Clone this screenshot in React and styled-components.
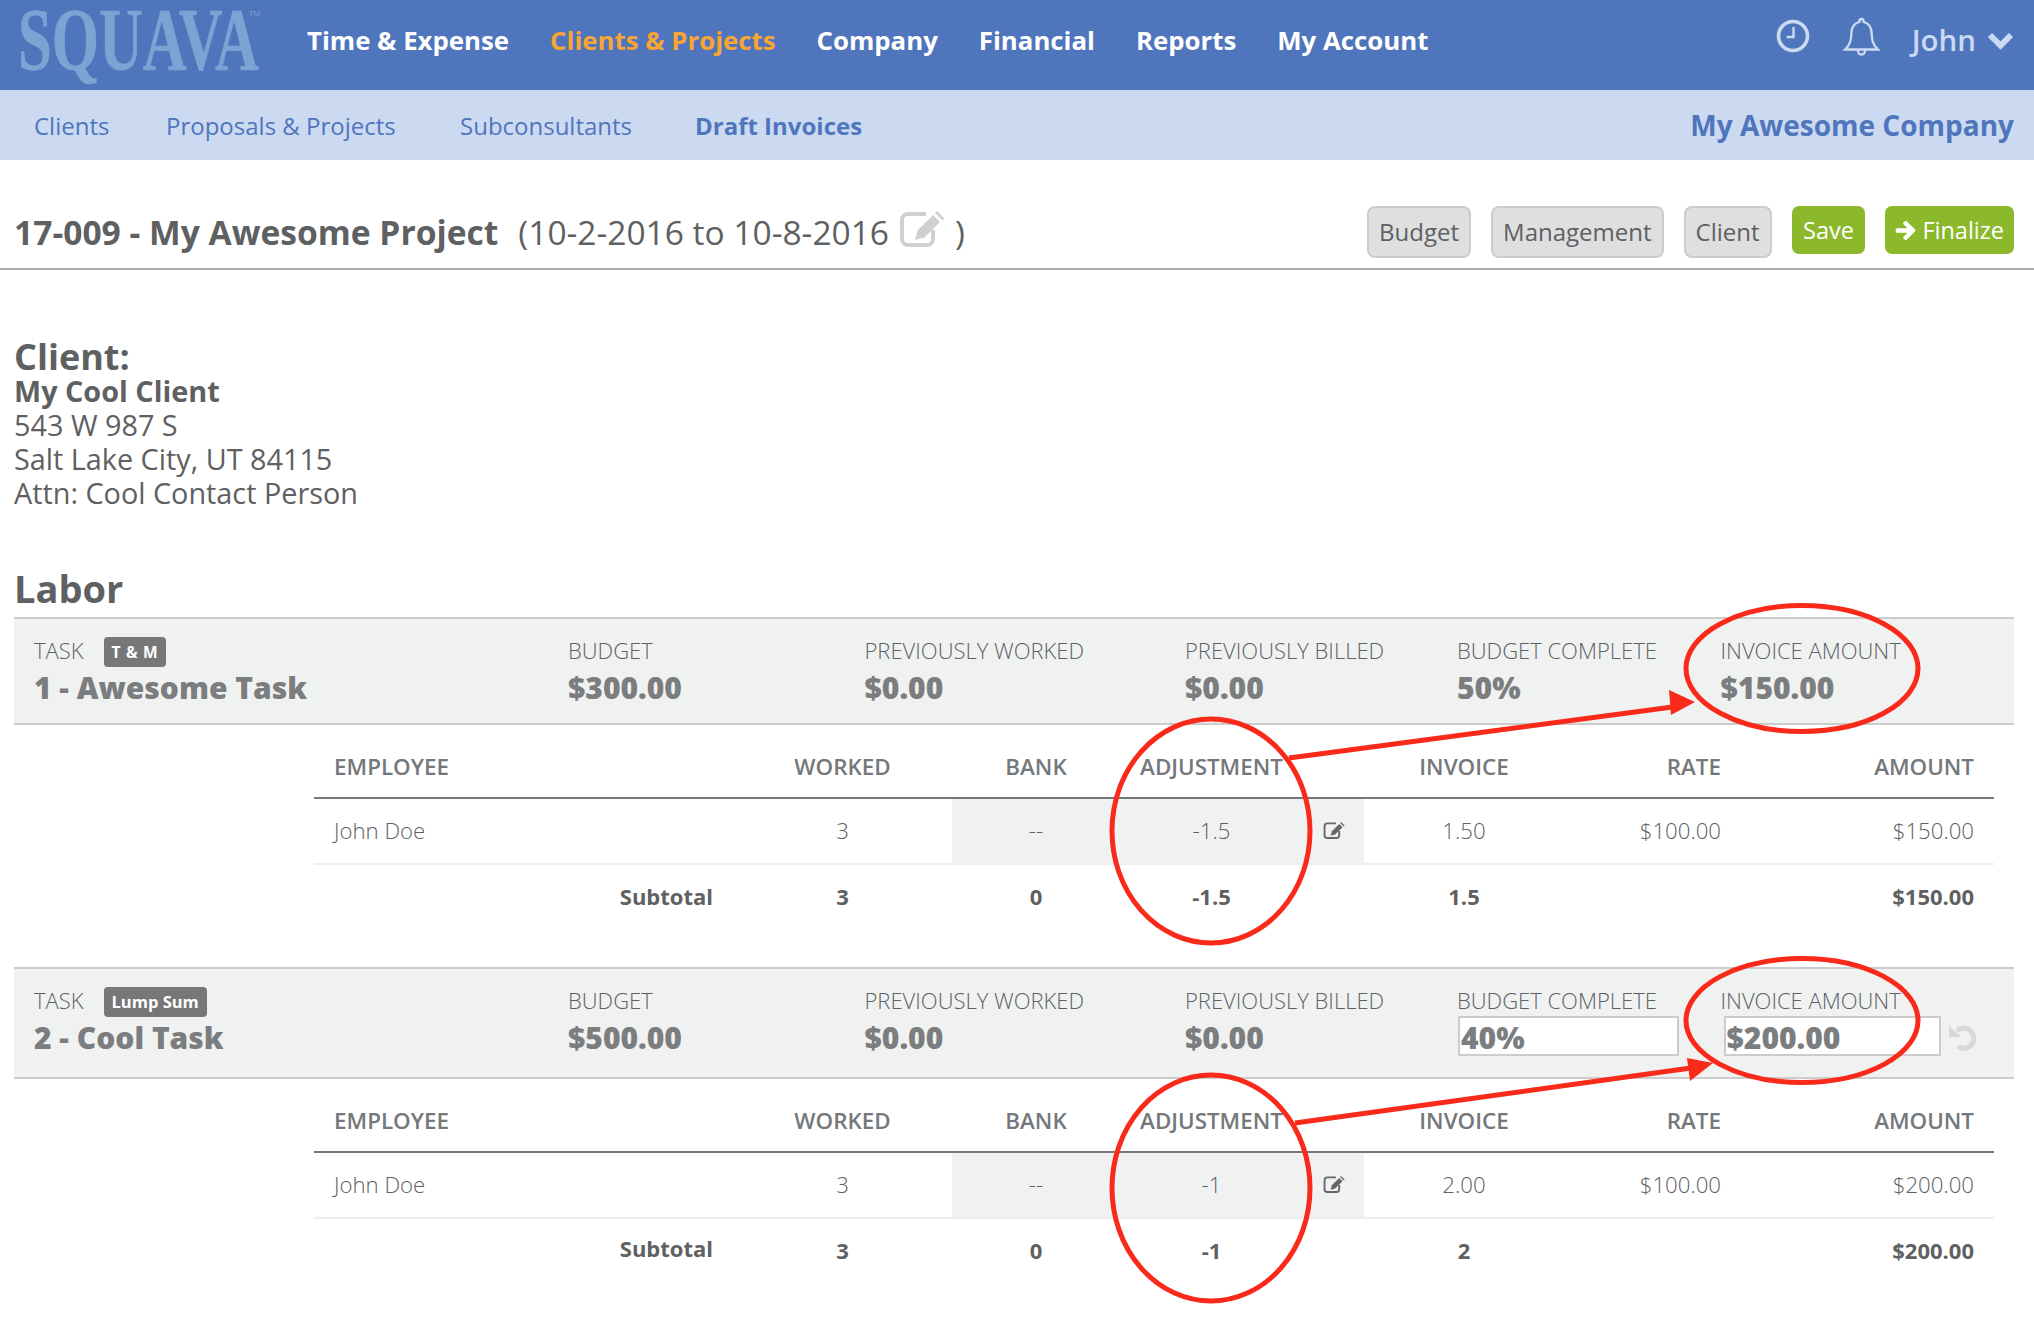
import React from "react";
import styled, { createGlobalStyle } from "styled-components";
import { FaArrowRight } from "react-icons/fa";

const Global = createGlobalStyle`
  html, body { margin: 0; padding: 0; background: #fff; }
  * { box-sizing: border-box; }
  body { font-family: "Open Sans", "Liberation Sans", sans-serif; color: #5e6062; }
`;

const Page = styled.div`
  position: relative;
  width: 2034px;
  height: 1320px;
  overflow: hidden;
`;

const TopBar = styled.header`
  display: flex;
  align-items: center;
  height: 90px;
  background: #4f75bd;
`;
const LogoBox = styled.div`
  position: relative;
  width: 307px;
  height: 90px;
  flex: none;
  padding-left: 18px;
`;
const Logo = styled.span`
  display: inline-block;
  font-family: "Liberation Serif", serif;
  font-weight: 700;
  font-size: 88px;
  line-height: 80px;
  color: #7ca3d3;
  -webkit-text-stroke: 0.6px #7ca3d3;
  transform: scaleX(0.69);
  transform-origin: left top;
  white-space: nowrap;
`;
const Trademark = styled.span`
  position: absolute;
  left: 249px;
  top: 8px;
  font-size: 8px;
  line-height: 10px;
  color: #7ca3d3;
`;
const MainNav = styled.nav`
  display: flex;
  gap: 41px;
  flex: 1;
`;
const MainLink = styled.a`
  font-size: 25.8px;
  font-weight: 700;
  line-height: 34px;
  margin-top: -10px;
  color: ${(p) => (p.$active ? "#f9a533" : "#fff")};
`;
const UserArea = styled.div`
  display: flex;
  align-items: center;
  color: #cbdaf1;
  padding-right: 20px;
  margin-top: -10px;
`;
const ClockIcon = styled.svg`
  width: 36px;
  height: 36px;
  margin-right: 32px;
  margin-top: -8px;
`;
const BellIcon = styled.svg`
  width: 37px;
  height: 40px;
  margin-right: 32px;
  margin-top: -6px;
`;
const UserName = styled.span`
  font-size: 29.5px;
  font-weight: 600;
  line-height: 40px;
  margin-right: 11px;
`;
const ChevronIcon = styled.svg`
  width: 27px;
  height: 18px;
  margin-top: 2px;
`;

const SubBar = styled.div`
  display: flex;
  align-items: center;
  height: 70px;
  background: #cbdaf1;
  padding: 0 20px 0 34px;
`;
const SubLink = styled.a`
  font-size: 24px;
  font-weight: ${(p) => (p.$active ? 700 : 400)};
  color: #4f75bd;
  width: ${(p) => p.$w}px;
  flex: none;
`;
const CompanyName = styled.div`
  margin-left: auto;
  font-size: 28px;
  font-weight: 700;
  color: #4f75bd;
`;

const TitleRow = styled.div`
  display: flex;
  align-items: flex-start;
  height: 110px;
  padding: 46px 20px 0 14px;
  border-bottom: 2px solid #aaa;
`;
const TitleMain = styled.h1`
  margin: 0 20px 0 0;
  font-size: 33.6px;
  font-weight: 700;
  line-height: 52px;
  color: #5e6062;
`;
const TitleDates = styled.div`
  display: flex;
  align-items: center;
  font-size: 33.5px;
  line-height: 52px;
  color: #5e6062;
`;
const PencilBox = styled.svg`
  width: ${(p) => p.$w}px;
  height: ${(p) => p.$h}px;
  color: ${(p) => p.$color};
  margin: ${(p) => p.$m || 0};
  flex: none;
`;
const Actions = styled.div`
  display: flex;
  gap: 20px;
  margin-left: auto;
`;
const GrayButton = styled.button`
  height: 52px;
  padding: 0 10px 2px;
  font: 400 24px "Open Sans", sans-serif;
  color: #5e6062;
  background: #dfdfdf;
  border: 2px solid #ccc;
  border-radius: 8px;
`;
const GreenButton = styled.button`
  display: flex;
  align-items: center;
  gap: 6px;
  height: 48px;
  padding: 0 ${(p) => p.$pad}px;
  font: 400 23.5px "Open Sans", sans-serif;
  color: #fff;
  background: #8cb82b;
  border: none;
  border-radius: 7px;
`;
const ArrowGlyph = styled(FaArrowRight)`
  width: 21px;
  height: 21px;
  stroke: currentColor;
  stroke-width: 30;
`;

const ClientBlock = styled.section`
  padding: 71px 14px 0;
  font-size: 28.8px;
  line-height: 34px;
  color: #5e6062;
`;
const SectionTitle = styled.h2`
  margin: -1px 0 0;
  font-size: 36px;
  font-weight: 700;
  line-height: 34px;
  color: #5e6062;
`;
const ClientName = styled.div`
  font-weight: 700;
`;
const LaborTitle = styled.h2`
  margin: 58px 14px 9px;
  font-size: 38px;
  font-weight: 700;
  line-height: 40px;
  color: #5e6062;
`;

const TaskHeader = styled.div`
  display: grid;
  grid-template-columns: 534px 296.5px 320.5px 272px 263.5px 1fr;
  margin: 0 20px 0 14px;
  height: ${(p) => p.$h}px;
  padding: 17px 0 0 20px;
  background: #f0f2f2;
  border-top: 2px solid #ccc;
  border-bottom: 2px solid #ccc;
`;
const StatCell = styled.div`
  position: relative;
`;
const StatLabel = styled.div`
  display: flex;
  align-items: center;
  gap: 20px;
  height: 28px;
  font-size: 22px;
  font-weight: 300;
  line-height: 28px;
  color: #5e6062;
`;
const StatValue = styled.div`
  font-size: 30px;
  font-weight: 800;
  line-height: 48px;
  color: #7b7d7f;
`;
const Badge = styled.span`
  display: inline-flex;
  align-items: center;
  height: 30px;
  margin-top: 3px;
  padding: 0 8px;
  font-size: ${(p) => (p.$spaced ? 15.5 : 16.5)}px;
  font-weight: 700;
  letter-spacing: ${(p) => (p.$spaced ? "0.7px" : "0")};
  color: #fff;
  background: #777;
  border-radius: 4px;
`;
const ValueInput = styled.input`
  display: block;
  margin: 2px 0 0 ${(p) => p.$ml}px;
  width: ${(p) => p.$w}px;
  height: 40px;
  padding: 2px 0 0 1px;
  background: #fff;
  border: 2px solid #ccc;
  border-radius: 0;
  font: 800 30px "Open Sans", sans-serif;
  color: #7b7d7f;
`;
const InputLine = styled.div`
  display: flex;
  align-items: center;
  gap: 8px;
`;
const UndoIcon = styled.svg`
  width: 28px;
  height: 28px;
  flex: none;
  margin-top: 6px;
`;

const COLS = "419px 219px 168px 183px 61px 200px 177px 1fr";
const TableWrap = styled.div`
  margin: 0 40px ${(p) => p.$mb || 0}px 314px;
`;
const Row = styled.div`
  display: grid;
  grid-template-columns: ${COLS};
  align-items: stretch;
  height: ${(p) => p.$h}px;
  border-bottom: ${(p) => p.$line || "none"};
`;
const HeadCell = styled.div`
  padding: 28px 20px 0;
  font-size: 22.4px;
  font-weight: 600;
  line-height: 28px;
  color: #75787b;
  white-space: nowrap;
  text-align: ${(p) => p.$a || "center"};
`;
const BodyCell = styled.div`
  display: flex;
  align-items: center;
  justify-content: ${(p) => p.$j || "center"};
  padding: 0 20px ${(p) => (p.$bold ? 4 : 2)}px;
  font-size: ${(p) => (p.$bold ? 22 : 22.2)}px;
  font-weight: ${(p) => (p.$bold ? 700 : 300)};
  color: #5e6062;
  background: ${(p) => (p.$shade ? "#f0f2f2" : "transparent")};
`;
const SubLabel = styled.span`
  position: relative;
  top: ${(p) => p.$top}px;
`;
const Overlay = styled.svg`
  position: absolute;
  left: 0;
  top: 0;
  pointer-events: none;
`;

function EditGlyph(props) {
  return (
    <PencilBox viewBox="0 0 46 36" fill="none" {...props}>
      <path
        d="M27 3H9a6 6 0 0 0-6 6v19a6 6 0 0 0 6 6h19a6 6 0 0 0 6-6V19"
        stroke="currentColor"
        strokeWidth="4"
      />
      <path d="M16 29l2.500-9.500L34 4l7 7-15.500 15.500z" fill="currentColor" />
      <path d="M36 2l2-2 7.500 7.500-2 2z" fill="currentColor" />
    </PencilBox>
  );
}

function TaskTable({ adj, inv, amount, invTotal, headH, mb, subTop }) {
  return (
    <TableWrap $mb={mb}>
      <Row $h={headH} $line="2px solid #777">
        <HeadCell $a="left">EMPLOYEE</HeadCell>
        <HeadCell>WORKED</HeadCell>
        <HeadCell>BANK</HeadCell>
        <HeadCell>ADJUSTMENT</HeadCell>
        <HeadCell />
        <HeadCell>INVOICE</HeadCell>
        <HeadCell $a="right">RATE</HeadCell>
        <HeadCell $a="right">AMOUNT</HeadCell>
      </Row>
      <Row $h={66} $line="2px solid #eee">
        <BodyCell $j="flex-start">John Doe</BodyCell>
        <BodyCell>3</BodyCell>
        <BodyCell $shade>--</BodyCell>
        <BodyCell $shade>{adj}</BodyCell>
        <BodyCell $shade><EditGlyph $w={22} $h={17} $color="#666" /></BodyCell>
        <BodyCell>{inv}</BodyCell>
        <BodyCell $j="flex-end">$100.00</BodyCell>
        <BodyCell $j="flex-end">{amount}</BodyCell>
      </Row>
      <Row $h={66}>
        <BodyCell $j="flex-end" $bold><SubLabel $top={subTop}>Subtotal</SubLabel></BodyCell>
        <BodyCell $bold>3</BodyCell>
        <BodyCell $bold>0</BodyCell>
        <BodyCell $bold>{adj}</BodyCell>
        <BodyCell />
        <BodyCell $bold>{invTotal}</BodyCell>
        <BodyCell />
        <BodyCell $j="flex-end" $bold>{amount}</BodyCell>
      </Row>
    </TableWrap>
  );
}

function Stat({ label, value }) {
  return (
    <StatCell>
      <StatLabel>{label}</StatLabel>
      <StatValue>{value}</StatValue>
    </StatCell>
  );
}

export default function App() {
  return (
    <Page>
      <Global />
      <TopBar>
        <LogoBox>
          <Logo>SQUAVA</Logo>
          <Trademark>TM</Trademark>
        </LogoBox>
        <MainNav>
          <MainLink>Time &amp; Expense</MainLink>
          <MainLink $active>Clients &amp; Projects</MainLink>
          <MainLink>Company</MainLink>
          <MainLink>Financial</MainLink>
          <MainLink>Reports</MainLink>
          <MainLink>My Account</MainLink>
        </MainNav>
        <UserArea>
          <ClockIcon viewBox="0 0 36 36" fill="none" stroke="currentColor">
            <circle cx="18" cy="18" r="14.5" strokeWidth="3.6" />
            <path d="M18.500 9v10h-7" strokeWidth="2.4" />
          </ClockIcon>
          <BellIcon viewBox="0 0 37 40" fill="none" stroke="currentColor" strokeWidth="2.300">
            <path d="M18.500 2c-1.500 0-2.200 1-2.200 3C10.800 6.400 8.600 10.600 8.400 16c-.2 6.400-.9 11.500-6.400 16.500h33c-5.500-5-6.200-10.100-6.400-16.500-.2-5.400-2.400-9.600-7.900-11C20.700 3 20 2 18.500 2z" />
            <path d="M15 33c0 2.800 1.500 4.500 3.500 4.500S22 35.800 22 33" />
          </BellIcon>
          <UserName>John</UserName>
          <ChevronIcon viewBox="0 0 27 18" fill="none" stroke="currentColor" strokeWidth="6">
            <path d="M3 3l10.500 10.500L24 3" />
          </ChevronIcon>
        </UserArea>
      </TopBar>

      <SubBar>
        <SubLink $w={132}>Clients</SubLink>
        <SubLink $w={294}>Proposals &amp; Projects</SubLink>
        <SubLink $w={235}>Subconsultants</SubLink>
        <SubLink $active>Draft Invoices</SubLink>
        <CompanyName>My Awesome Company</CompanyName>
      </SubBar>

      <TitleRow>
        <TitleMain>17-009 - My Awesome Project</TitleMain>
        <TitleDates>
          (10-2-2016 to 10-8-2016
          <EditGlyph $w={46} $h={36} $color="#d0d0d0" $m="-6px 10px 0 10px" />
          )
        </TitleDates>
        <Actions>
          <GrayButton>Budget</GrayButton>
          <GrayButton>Management</GrayButton>
          <GrayButton>Client</GrayButton>
          <GreenButton $pad={11.5}>Save</GreenButton>
          <GreenButton $pad={10}><ArrowGlyph />Finalize</GreenButton>
        </Actions>
      </TitleRow>

      <ClientBlock>
        <SectionTitle>Client:</SectionTitle>
        <ClientName>My Cool Client</ClientName>
        <div>543 W 987 S</div>
        <div>Salt Lake City, UT 84115</div>
        <div>Attn: Cool Contact Person</div>
      </ClientBlock>

      <LaborTitle>Labor</LaborTitle>

      <TaskHeader $h={108}>
        <StatCell>
          <StatLabel>TASK <Badge $spaced>T &amp; M</Badge></StatLabel>
          <StatValue>1 - Awesome Task</StatValue>
        </StatCell>
        <Stat label="BUDGET" value="$300.00" />
        <Stat label="PREVIOUSLY WORKED" value="$0.00" />
        <Stat label="PREVIOUSLY BILLED" value="$0.00" />
        <Stat label="BUDGET COMPLETE" value="50%" />
        <Stat label="INVOICE AMOUNT" value="$150.00" />
      </TaskHeader>
      <TaskTable adj="-1.5" inv="1.50" amount="$150.00" invTotal="1.5" headH={74} mb={36} subTop={0} />

      <TaskHeader $h={112}>
        <StatCell>
          <StatLabel>TASK <Badge>Lump Sum</Badge></StatLabel>
          <StatValue>2 - Cool Task</StatValue>
        </StatCell>
        <Stat label="BUDGET" value="$500.00" />
        <Stat label="PREVIOUSLY WORKED" value="$0.00" />
        <Stat label="PREVIOUSLY BILLED" value="$0.00" />
        <StatCell>
          <StatLabel>BUDGET COMPLETE</StatLabel>
          <ValueInput $ml={1} $w={221} defaultValue="40%" />
        </StatCell>
        <StatCell>
          <StatLabel>INVOICE AMOUNT</StatLabel>
          <InputLine>
            <ValueInput $ml={3} $w={217} defaultValue="$200.00" />
            <UndoIcon viewBox="0 0 28 28">
              <path d="M8 7a10 10 0 1 1 1 15.500" fill="none" stroke="#d8d8d8" strokeWidth="5" />
              <path d="M0 2l12 11H0z" fill="#d8d8d8" />
            </UndoIcon>
          </InputLine>
        </StatCell>
      </TaskHeader>
      <TaskTable adj="-1" inv="2.00" amount="$200.00" invTotal="2" headH={74} subTop={-2} />

      <Overlay width="2034" height="1320" viewBox="0 0 2034 1320" fill="none">
        <g stroke="#fa2a1b" strokeWidth="5">
          <ellipse cx="1802" cy="668.5" rx="116" ry="63" />
          <ellipse cx="1211" cy="831" rx="99" ry="112" />
          <ellipse cx="1802" cy="1020.500" rx="116" ry="62" />
          <ellipse cx="1211" cy="1188" rx="99" ry="113" />
          <path d="M1289 758L1680 706" />
          <path d="M1295 1123L1698 1067" />
        </g>
        <g fill="#fa2a1b">
          <path d="M1695 702L1669 690L1671 715Z" />
          <path d="M1713 1063L1687 1058L1690 1081Z" />
        </g>
      </Overlay>
    </Page>
  );
}
